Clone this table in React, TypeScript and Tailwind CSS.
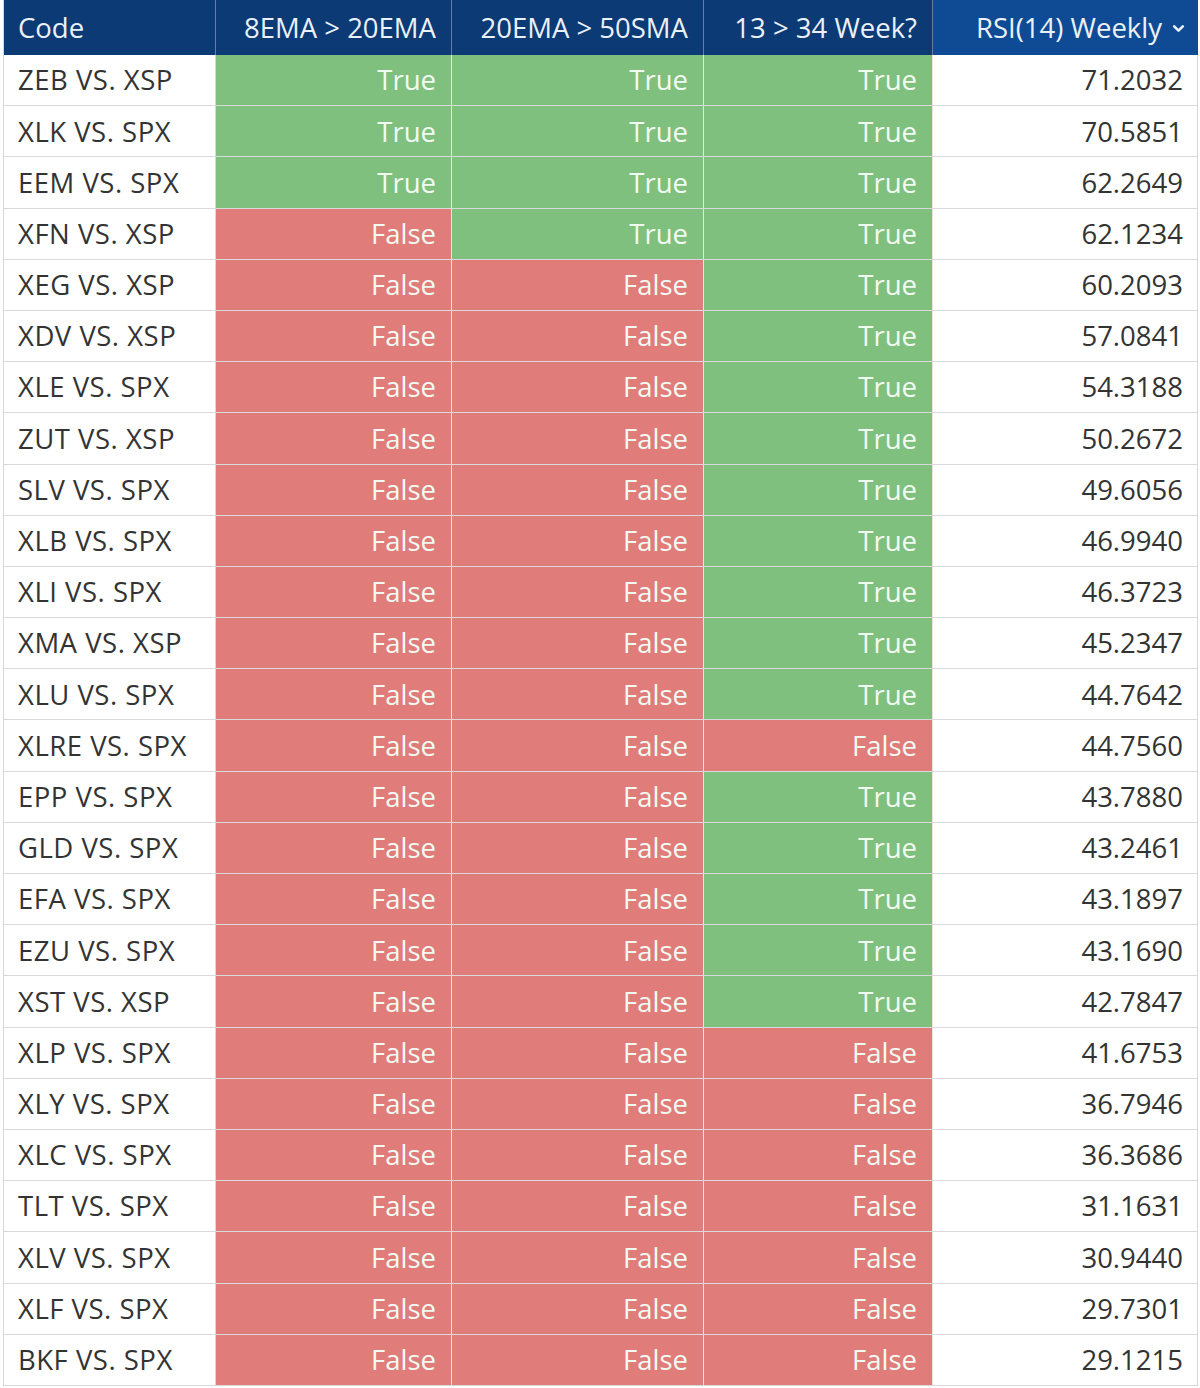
const rows: [string, boolean, boolean, boolean, string][] = [
  ['ZEB VS. XSP', true, true, true, '71.2032'],
  ['XLK VS. SPX', true, true, true, '70.5851'],
  ['EEM VS. SPX', true, true, true, '62.2649'],
  ['XFN VS. XSP', false, true, true, '62.1234'],
  ['XEG VS. XSP', false, false, true, '60.2093'],
  ['XDV VS. XSP', false, false, true, '57.0841'],
  ['XLE VS. SPX', false, false, true, '54.3188'],
  ['ZUT VS. XSP', false, false, true, '50.2672'],
  ['SLV VS. SPX', false, false, true, '49.6056'],
  ['XLB VS. SPX', false, false, true, '46.9940'],
  ['XLI VS. SPX', false, false, true, '46.3723'],
  ['XMA VS. XSP', false, false, true, '45.2347'],
  ['XLU VS. SPX', false, false, true, '44.7642'],
  ['XLRE VS. SPX', false, false, false, '44.7560'],
  ['EPP VS. SPX', false, false, true, '43.7880'],
  ['GLD VS. SPX', false, false, true, '43.2461'],
  ['EFA VS. SPX', false, false, true, '43.1897'],
  ['EZU VS. SPX', false, false, true, '43.1690'],
  ['XST VS. XSP', false, false, true, '42.7847'],
  ['XLP VS. SPX', false, false, false, '41.6753'],
  ['XLY VS. SPX', false, false, false, '36.7946'],
  ['XLC VS. SPX', false, false, false, '36.3686'],
  ['TLT VS. SPX', false, false, false, '31.1631'],
  ['XLV VS. SPX', false, false, false, '30.9440'],
  ['XLF VS. SPX', false, false, false, '29.7301'],
  ['BKF VS. SPX', false, false, false, '29.1215'],
]

const cols = 'grid grid-cols-[212px_236px_252px_229px_265px]'

export default function App() {
  return (
    <div className="min-h-[1388px] bg-white pl-[3px] font-['Open_Sans',sans-serif] text-[27.5px] leading-none">
      <div className="w-[1195px] border-l border-r border-[#d6d6d6]">
        <div className={`${cols} h-[55px] bg-[#0c3a74] text-[#eaf1fb]`}>
          <div className="flex items-center border-r border-[#5f7fa8] px-[14px]">Code</div>
          <div className="flex items-center justify-end border-r border-[#5f7fa8] px-[15px]">8EMA &gt; 20EMA</div>
          <div className="flex items-center justify-end border-r border-[#5f7fa8] px-[15px]">20EMA &gt; 50SMA</div>
          <div className="flex items-center justify-end border-r border-[#5f7fa8] px-[15px]">13 &gt; 34 Week?</div>
          <div className="flex items-center justify-end gap-[10px] bg-[#0f4b95] pr-[13px]">
            RSI(14) Weekly
            <svg width="13" height="13" viewBox="0 0 12 12" className="mt-[2px]">
              <path d="M2 4l4 4 4-4" fill="none" stroke="#eaf1fb" strokeWidth="2.4" strokeLinecap="round" strokeLinejoin="round" />
            </svg>
          </div>
        </div>
        {rows.map(([code, a, b, c, rsi]) => (
          <div key={code} className={`${cols} h-[51.2px] border-b border-[#d9d9d9]`}>
            <div className="flex items-center border-r border-[#d9d9d9] px-[14px] tracking-[0.5px] text-[#333]">{code}</div>
            <Flag v={a} />
            <Flag v={b} />
            <Flag v={c} />
            <div className="flex items-center justify-end pr-[15px] text-[#333]">{rsi}</div>
          </div>
        ))}
      </div>
    </div>
  )
}

function Flag({ v }: { v: boolean }) {
  return (
    <div
      className={`flex items-center justify-end border-r border-[#e6e6e6] pr-[15px] text-[#f2fbf2] ${
        v ? 'bg-[#7fc07e]' : 'bg-[#e07c7a]'
      }`}
    >
      {v ? 'True' : 'False'}
    </div>
  )
}
